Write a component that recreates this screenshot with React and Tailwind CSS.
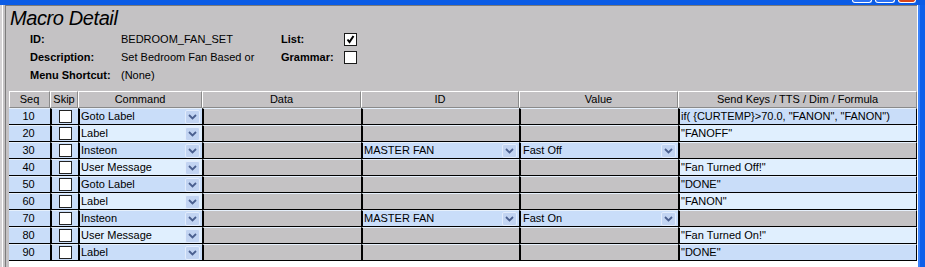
import React from "react";

const rows = [
  { seq: 10, cmd: "Goto Label", send: 'if( {CURTEMP}>70.0, "FANON", "FANON")' },
  { seq: 20, cmd: "Label", send: '"FANOFF"' },
  { seq: 30, cmd: "Insteon", id: "MASTER FAN", value: "Fast Off" },
  { seq: 40, cmd: "User Message", send: '"Fan Turned Off!"' },
  { seq: 50, cmd: "Goto Label", send: '"DONE"' },
  { seq: 60, cmd: "Label", send: '"FANON"' },
  { seq: 70, cmd: "Insteon", id: "MASTER FAN", value: "Fast On" },
  { seq: 80, cmd: "User Message", send: '"Fan Turned On!"' },
  { seq: 90, cmd: "Label", send: '"DONE"' },
];

function Chevron() {
  return (
    <svg width="9" height="6" viewBox="0 0 9 6">
      <path d="M1 1 L4.5 4.5 L8 1" stroke="#4a5f8f" strokeWidth="1.8" fill="none" />
    </svg>
  );
}

function DropBtn() {
  return (
    <div className="w-[15px] h-[14px] mr-[2px] shrink-0 bg-[#c2d4f2] border border-[#e2ecfc] rounded-[2px] flex items-center justify-center">
      <Chevron />
    </div>
  );
}

function Check({ checked }) {
  return (
    <div className="w-[13px] h-[13px] bg-white border border-[#1a1a1a] flex items-center justify-center">
      {checked && (
        <svg width="11" height="11" viewBox="0 0 11 11">
          <path d="M2.5 5.5 L4.5 8 L8.5 2" stroke="#000" strokeWidth="2" fill="none" />
        </svg>
      )}
    </div>
  );
}

const cellBase = "h-[17px] border-t border-t-[#e6f0fc] border-b border-b-black flex items-center overflow-hidden whitespace-nowrap";

export default function App() {
  return (
    <div className="w-[925px] h-[267px] flex flex-col font-['Liberation_Sans',Arial,sans-serif] text-[11px] text-black overflow-hidden">
      {/* title bar remnant */}
      <div className="h-[5px] bg-[#0b5ce6] flex justify-end items-start pr-[9px] gap-[3px]">
        <div className="w-[20px] h-[3px] border-b border-x border-white rounded-b-[3px] bg-[#2c72f4]" />
        <div className="w-[20px] h-[3px] border-b border-x border-white rounded-b-[3px] bg-[#2c72f4]" />
        <div className="w-[18px] h-[3px] border-b border-x border-white rounded-b-[3px] bg-[#d8451c]" />
      </div>
      <div className="flex-1 flex min-h-0">
        {/* left frame */}
        <div className="w-[6px] flex shrink-0">
          <div className="w-[2px] bg-[#d4d2d4]" />
          <div className="w-[1px] bg-white" />
          <div className="w-[2px] bg-[#c4c2c4]" />
          <div className="w-[1px] bg-[#7c7c7c]" />
        </div>
        {/* panel */}
        <div className="flex-1 flex flex-col bg-[#c4c2c4] border-t border-t-[#7b7b7b]">
          <div className="h-[85px] shrink-0 flex flex-col">
            <div className="pl-[4px] pt-[1px] h-[24px] leading-[23px] text-[20px] tracking-[-0.4px] italic">
              Macro Detail
            </div>
            <div className="flex flex-col pl-[24px]">
              <div className="h-[18px] flex items-center">
                <div className="w-[91px] font-bold">ID:</div>
                <div className="w-[160px]">BEDROOM_FAN_SET</div>
                <div className="w-[63px] font-bold">List:</div>
                <Check checked />
              </div>
              <div className="h-[18px] flex items-center">
                <div className="w-[91px] font-bold">Description:</div>
                <div className="w-[160px] overflow-hidden whitespace-nowrap pr-[30px]">Set Bedroom Fan Based or</div>
                <div className="w-[63px] font-bold">Grammar:</div>
                <Check />
              </div>
              <div className="h-[18px] flex items-center">
                <div className="w-[91px] font-bold">Menu Shortcut:</div>
                <div className="w-[160px]">(None)</div>
              </div>
            </div>
          </div>
          {/* table */}
          <div className="flex-1 ml-[3px] bg-white">
            <div className="grid grid-cols-[41px_28px_124px_159px_158px_159px_239px]">
              {["Seq", "Skip", "Command", "Data", "ID", "Value", "Send Keys / TTS / Dim / Formula"].map((h) => (
                <div
                  key={h}
                  className="h-[17px] bg-[#c4c2c4] border-l border-l-white border-t border-t-white border-r border-r-[#8a8a8a] border-b border-b-[#8a8a8a] flex items-center justify-center whitespace-nowrap"
                >
                  {h}
                </div>
              ))}
              {rows.map((r, i) => {
                const odd = i % 2 === 0;
                const blue = odd ? "bg-[#c9ddf9]" : "bg-[#e0effe]";
                const ins = !!r.id;
                return (
                  <React.Fragment key={r.seq}>
                    <div className={`${cellBase} bg-[#c9ddf9] justify-center pr-[2px]`}>{r.seq}</div>
                    <div className={`${cellBase} bg-[#c9ddf9] border-l-2 border-l-black justify-center`}>
                      <div className="w-[13px] h-[13px] bg-white border border-[#222]" />
                    </div>
                    <div className={`${cellBase} ${blue} border-l-2 border-l-black justify-between pl-[1px]`}>
                      <span>{r.cmd}</span>
                      <DropBtn />
                    </div>
                    <div className={`${cellBase} bg-[#c4c2c4] border-l-2 border-l-black`} />
                    <div className={`${cellBase} ${ins ? blue : "bg-[#c4c2c4]"} border-l-2 border-l-black justify-between pl-[1px]`}>
                      {ins && (
                        <>
                          <span>{r.id}</span>
                          <DropBtn />
                        </>
                      )}
                    </div>
                    <div className={`${cellBase} ${ins ? blue : "bg-[#c4c2c4]"} border-l-2 border-l-black justify-between pl-[2px]`}>
                      {ins && (
                        <>
                          <span>{r.value}</span>
                          <DropBtn />
                        </>
                      )}
                    </div>
                    <div className={`${cellBase} ${ins ? "bg-[#c4c2c4]" : blue} border-l-2 border-l-black border-r border-r-black pl-[1px]`}>
                      {r.send}
                    </div>
                  </React.Fragment>
                );
              })}
            </div>
          </div>
        </div>
        {/* right frame */}
        <div className="w-[8px] shrink-0 border-l border-l-white bg-[#0d5fea] flex">
          <div className="w-[2px] bg-[#3c82fa]" />
        </div>
      </div>
    </div>
  );
}
